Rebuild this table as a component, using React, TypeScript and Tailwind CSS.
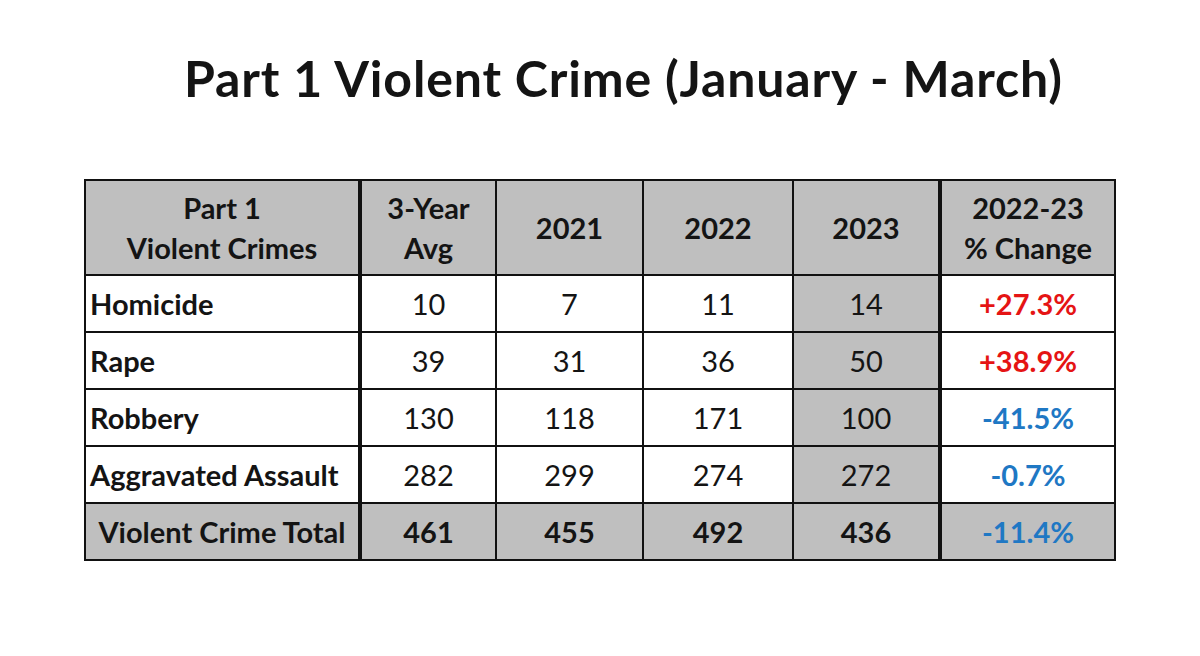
import React from 'react';

// Part 1 violent crime table, Jan - Mar comparison
const rows = [
  { label: 'Homicide', avg: '10', y21: '7', y22: '11', y23: '14', change: '+27.3%', up: true },
  { label: 'Rape', avg: '39', y21: '31', y22: '36', y23: '50', change: '+38.9%', up: true },
  { label: 'Robbery', avg: '130', y21: '118', y22: '171', y23: '100', change: '-41.5%', up: false },
  { label: 'Aggravated Assault', avg: '282', y21: '299', y22: '274', y23: '272', change: '-0.7%', up: false },
];

const font = { fontFamily: 'Lato, "Open Sans", sans-serif' };

export default function App() {
  return (
    <div className="w-[1200px] h-[656px] bg-white text-[#141414] overflow-hidden" style={font}>
      <h1 className="pt-[47px] pl-[184px] text-[50px] leading-[62px] font-bold tracking-[0.85px]">
        Part 1 Violent Crime (January - March)
      </h1>

      <div className="ml-[84px] mt-[70px] w-[1032px] border-2 border-[#111] grid grid-cols-[276px_135px_147px_150px_148px_172px] text-[29px]">
        {/* header */}
        <div className="h-[95px] bg-[#bfbfbf] border-r-4 border-b-2 border-[#111] flex flex-col items-center justify-center font-bold leading-[40px]">
          <span>Part 1</span>
          <span>Violent Crimes</span>
        </div>
        <div className="h-[95px] bg-[#bfbfbf] border-r-2 border-b-2 border-[#111] flex flex-col items-center justify-center font-bold leading-[40px]">
          <span>3-Year</span>
          <span>Avg</span>
        </div>
        <div className="h-[95px] bg-[#bfbfbf] border-r-2 border-b-2 border-[#111] flex items-center justify-center font-bold">2021</div>
        <div className="h-[95px] bg-[#bfbfbf] border-r-2 border-b-2 border-[#111] flex items-center justify-center font-bold">2022</div>
        <div className="h-[95px] bg-[#bfbfbf] border-r-4 border-b-2 border-[#111] flex items-center justify-center font-bold">2023</div>
        <div className="h-[95px] bg-[#bfbfbf] border-b-2 border-[#111] flex flex-col items-center justify-center font-bold leading-[40px]">
          <span>2022-23</span>
          <span>% Change</span>
        </div>

        {rows.map((r) => (
          <React.Fragment key={r.label}>
            <div className="h-[57px] border-r-4 border-b-2 border-[#111] flex items-center pl-[4px] font-bold">{r.label}</div>
            <div className="h-[57px] border-r-2 border-b-2 border-[#111] flex items-center justify-center">{r.avg}</div>
            <div className="h-[57px] border-r-2 border-b-2 border-[#111] flex items-center justify-center">{r.y21}</div>
            <div className="h-[57px] border-r-2 border-b-2 border-[#111] flex items-center justify-center">{r.y22}</div>
            <div className="h-[57px] bg-[#bfbfbf] border-r-4 border-b-2 border-[#111] flex items-center justify-center">{r.y23}</div>
            <div className={`h-[57px] border-b-2 border-[#111] flex items-center justify-center font-bold ${r.up ? 'text-[#e51414]' : 'text-[#1f78c4]'}`}>
              {r.change}
            </div>
          </React.Fragment>
        ))}

        {/* total */}
        <div className="h-[55px] bg-[#bfbfbf] border-r-4 border-[#111] flex items-center justify-center font-bold">Violent Crime Total</div>
        <div className="h-[55px] bg-[#bfbfbf] border-r-2 border-[#111] flex items-center justify-center font-bold">461</div>
        <div className="h-[55px] bg-[#bfbfbf] border-r-2 border-[#111] flex items-center justify-center font-bold">455</div>
        <div className="h-[55px] bg-[#bfbfbf] border-r-2 border-[#111] flex items-center justify-center font-bold">492</div>
        <div className="h-[55px] bg-[#bfbfbf] border-r-4 border-[#111] flex items-center justify-center font-bold">436</div>
        <div className="h-[55px] bg-[#bfbfbf] flex items-center justify-center font-bold text-[#1f78c4]">-11.4%</div>
      </div>
    </div>
  );
}
